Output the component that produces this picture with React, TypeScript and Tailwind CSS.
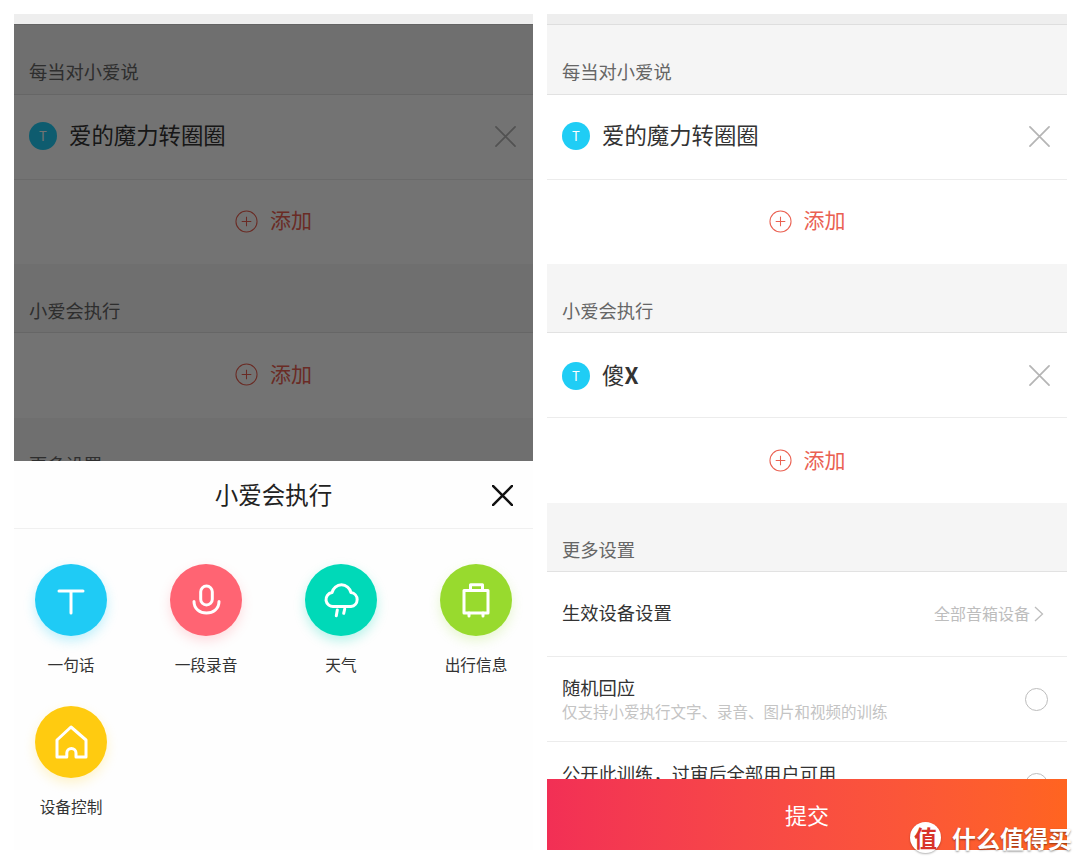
import React from 'react';

const SectionHeader = ({ title, first }: { title: string; first?: boolean }) => (
  <div
    className={`bg-[#f5f5f5] border-b border-[#e2e2e2] flex items-end pl-[15px] ${
      first ? 'h-[70px] pb-[11px]' : 'h-[69px] pb-[10px]'
    }`}
  >
    <span className="text-[18.3px] leading-[24px] text-[#666]">{title}</span>
  </div>
);

const CloseIcon = ({ className }: { className: string }) => (
  <svg viewBox="0 0 22 22" className={className} fill="none" stroke="currentColor" strokeLinecap="round">
    <path d="M1 1 21 21M21 1 1 21" />
  </svg>
);

const ItemRow = ({ title, low }: { title: React.ReactNode; low?: boolean }) => (
  <div className={`h-[85px] bg-white border-b border-[#ececec] flex items-center pl-[15px] pr-[17px] ${low ? 'pt-[1px]' : 'pb-[2px]'}`}>
    <div className="w-[28px] h-[28px] rounded-full bg-[#1fcdf5] flex items-center justify-center text-white text-[13px]">
      T
    </div>
    <span className="ml-[12px] pb-[4px] text-[22.4px] leading-[30px] text-[#333] flex-1">{title}</span>
    <CloseIcon className="w-[21px] h-[21px] text-[#b5b5b5] stroke-[1.8]" />
  </div>
);

const AddRow = ({ short, low }: { short?: boolean; low?: boolean }) => (
  <div className={`bg-white flex items-center justify-center gap-[12px] ${low ? '' : 'pb-[2px]'} ${short ? 'h-[84px]' : 'h-[85px]'}`}>
    <svg viewBox="0 0 24 24" className="w-[23px] h-[23px] text-[#ea6152]" fill="none" stroke="currentColor" strokeWidth="1.1">
      <circle cx="12" cy="12" r="11" />
      <path d="M12 7v10M7 12h10" />
    </svg>
    <span className="pb-[4px] text-[21px] leading-[28px] text-[#ea6152]">添加</span>
  </div>
);

const Radio = () => (
  <div className="w-[23px] h-[23px] rounded-full border-[1.5px] border-[#bdbdbd]" />
);

const TopBar = () => <div className="h-[11px] bg-[#eeeeee] border-b border-[#dedede]" />;

const actions = [
  {
    label: '一句话',
    circle: 'bg-[#1fcbf5] shadow-[0_5px_12px_rgba(31,203,245,0.28)]',
    icon: <path d="M24 27H48M36 27V49" />,
  },
  {
    label: '一段录音',
    circle: 'bg-[#ff6473] shadow-[0_5px_12px_rgba(255,100,115,0.22)]',
    icon: (
      <>
        <rect x="30.7" y="22" width="11.6" height="19" rx="5.8" />
        <path d="M24 37.5C24 45 30 49 36.5 49S49 45 49 37.5" />
      </>
    ),
  },
  {
    label: '天气',
    circle: 'bg-[#00d9b8] shadow-[0_5px_12px_rgba(0,217,184,0.28)]',
    icon: (
      <>
        <path d="M29 42.5H46A7 7 0 0 0 46 28.6A9.7 9.7 0 0 0 27 28.6A7 7 0 0 0 29 42.5Z" />
        <path d="M32.3 46 31.3 51.7M39.7 45 38.7 49.3" />
      </>
    ),
  },
  {
    label: '出行信息',
    circle: 'bg-[#98da2e] shadow-[0_5px_12px_rgba(152,218,46,0.22)]',
    icon: (
      <>
        <rect x="24" y="26.5" width="24" height="22.5" />
        <path d="M30.5 26V20.8H42.5V26M29 49V52M43 49V52" />
      </>
    ),
  },
  {
    label: '设备控制',
    circle: 'bg-[#ffcb10] shadow-[0_5px_12px_rgba(255,203,16,0.22)]',
    icon: <path d="M36 21 51 34V51H41V47A4.6 4.6 0 0 0 31.8 47V51H22V34Z" />,
  },
];

const ActionSheet = () => (
  <div className="absolute left-0 right-0 bottom-0 h-[389px] bg-[#fefefe]">
    <div className="h-[68px] border-b border-[#f0f0f0] flex items-center justify-center pb-[2px] relative">
      <span className="text-[23.5px] leading-[32px] text-[#222]">小爱会执行</span>
      <CloseIcon className="absolute right-[20px] top-[24px] w-[21px] h-[21px] text-[#111] stroke-[2.6]" />
    </div>
    <div className="grid grid-cols-[repeat(4,72px)] gap-x-[63px] gap-y-[30px] pl-[21px] pt-[35px]">
      {actions.map((a) => (
        <div key={a.label} className="flex flex-col items-center">
          <div className={`w-[72px] h-[72px] rounded-full ${a.circle}`}>
            <svg viewBox="0 0 72 72" className="w-[72px] h-[72px]" fill="none" stroke="white" strokeWidth="3" strokeLinecap="round" strokeLinejoin="round">
              {a.icon}
            </svg>
          </div>
          <span className="mt-[18px] text-[15.7px] leading-[22px] text-[#333] whitespace-nowrap">{a.label}</span>
        </div>
      ))}
    </div>
  </div>
);

const LeftPanel = () => (
  <div className="relative w-[519px] h-[836px] overflow-hidden bg-white">
    <TopBar />
    <SectionHeader first title="每当对小爱说" />
    <ItemRow title="爱的魔力转圈圈" />
    <AddRow short />
    <SectionHeader title="小爱会执行" />
    <AddRow />
    <SectionHeader title="更多设置" />
    <div className="absolute left-0 right-0 top-[10px] bottom-0 bg-black/55" />
    <ActionSheet />
  </div>
);

const RightPanel = () => (
  <div className="relative w-[520px] h-[836px] overflow-hidden bg-white">
    <TopBar />
    <SectionHeader first title="每当对小爱说" />
    <ItemRow title="爱的魔力转圈圈" />
    <AddRow short />
    <SectionHeader title="小爱会执行" />
    <ItemRow low title={<>傻<b>X</b></>} />
    <AddRow low />
    <SectionHeader title="更多设置" />

    <div className="h-[85px] border-b border-[#ececec] flex items-center pl-[15px] pr-[23px]">
      <span className="pb-[4px] text-[18.3px] leading-[24px] text-[#333] flex-1">生效设备设置</span>
      <span className="pb-[2px] text-[16px] leading-[22px] text-[#bdbdbd]">全部音箱设备</span>
      <svg viewBox="0 0 10 16" className="ml-[4px] w-[10px] h-[16px] text-[#bdbdbd]" fill="none" stroke="currentColor" strokeWidth="1.3">
        <path d="M1 1 8.5 8 1 15" />
      </svg>
    </div>

    <div className="h-[85px] border-b border-[#ececec] flex items-center pl-[15px] pr-[19px]">
      <div className="flex-1">
        <div className="text-[18.3px] leading-[24px] text-[#333]">随机回应</div>
        <div className="text-[15.5px] leading-[24px] text-[#c4c4c4]">仅支持小爱执行文字、录音、图片和视频的训练</div>
      </div>
      <Radio />
    </div>

    <div className="h-[85px] flex items-center pl-[15px] pr-[19px]">
      <div className="flex-1">
        <div className="text-[18.3px] leading-[24px] text-[#333]">公开此训练，过审后全部用户可用</div>
        <div className="h-[24px]" />
      </div>
      <Radio />
    </div>

    <div className="absolute left-0 right-0 bottom-0 h-[71px] bg-gradient-to-r from-[#f22f55] to-[#ff6420] flex items-center justify-center pb-[2px]">
      <span className="text-[22px] leading-[30px] text-white">提交</span>
    </div>
  </div>
);

export default function App() {
  return (
    <div
      className="relative w-[1080px] h-[864px] bg-white overflow-hidden flex gap-[14px] pl-[14px] pt-[14px]"
      style={{ fontFamily: '"Noto Sans CJK SC", sans-serif' }}
    >
      <LeftPanel />
      <RightPanel />
      {/* watermark */}
      <div className="absolute left-[910px] top-[822px] flex items-center gap-[11px]">
        <div className="w-[31px] h-[31px] rounded-full bg-white shadow-[0_1px_2px_rgba(0,0,0,0.3)] flex items-center justify-center text-[23px] leading-none font-bold text-[#d8342b]">
          值
        </div>
        <span className="text-[24px] leading-[30px] font-bold text-white whitespace-nowrap [text-shadow:0_1px_2px_rgba(0,0,0,0.45)]">什么值得买</span>
      </div>
    </div>
  );
}
